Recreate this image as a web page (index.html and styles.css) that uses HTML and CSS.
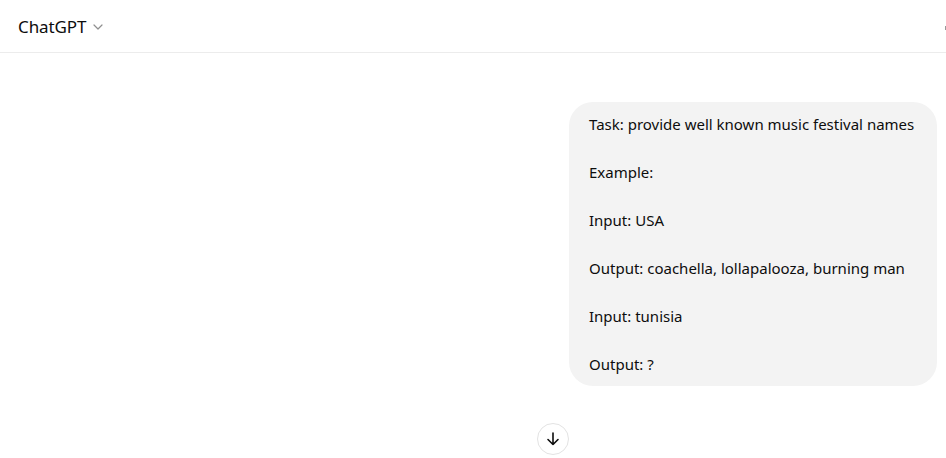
FILE: index.html
```html
<!DOCTYPE html>
<html lang="en">
<head>
<meta charset="utf-8">
<title>ChatGPT</title>
<link rel="stylesheet" href="styles.css">
</head>
<body>
<header class="topbar">
  <div class="model">
    <span class="model-name">ChatGPT</span>
    <svg class="chev" width="12" height="12" viewBox="0 0 12 12" fill="none"><path d="M2 4l4 4 4-4" stroke="#8f8f8f" stroke-width="1.2" stroke-linecap="round" stroke-linejoin="round"/></svg>
  </div>
  <span class="edge-icon"></span>
</header>
<main class="thread">
  <div class="row">
    <div class="bubble">
      <p>Task: provide well known music festival names</p>
      <p>Example:</p>
      <p>Input: USA</p>
      <p>Output: coachella, lollapalooza, burning man</p>
      <p>Input: tunisia</p>
      <p>Output: ?</p>
    </div>
  </div>
  <div class="scroll-row">
    <button class="scroll-btn" aria-label="Scroll down">
      <svg width="18" height="18" viewBox="0 0 18 18" fill="none"><path d="M9 3v11.5M4 9.5l5 5 5-5" stroke="#0d0d0d" stroke-width="1.6" stroke-linecap="round" stroke-linejoin="round"/></svg>
    </button>
  </div>
</main>
</body>
</html>
```
FILE: styles.css
```css
* { box-sizing: border-box; }
html, body { margin: 0; padding: 0; background: #fff; }
body {
  font-family: "Noto Sans", "Open Sans", sans-serif;
  color: #0d0d0d;
  width: 946px;
  height: 458px;
  overflow: hidden;
}
.topbar {
  height: 53px;
  border-bottom: 1px solid #ececec;
  display: flex;
  align-items: center;
  justify-content: space-between;
  padding: 0 0 0 18px;
}
.model { display: flex; align-items: center; gap: 6px; }
.model-name { font-size: 17px; letter-spacing: -0.1px; }
.chev { margin-top: 1px; }
.edge-icon {
  width: 1px; height: 4px; background: #999; margin-top: 4px;
}
.thread { display: flex; flex-direction: column; }
.row {
  display: flex;
  justify-content: flex-end;
  padding: 49px 9px 0 0;
}
.bubble {
  background: #f3f3f3;
  border-radius: 24px;
  padding: 10px 20px 10px 20px;
  width: 368px;
  font-size: 15px;
  line-height: 24px;
}
.bubble p { margin: 0 0 24px 0; white-space: nowrap; }
.bubble p:last-child { margin-bottom: 0; }
.scroll-row { display: flex; justify-content: center; padding: 37px 0 0 160px; }
.scroll-btn {
  width: 32px; height: 32px;
  border-radius: 50%;
  border: 1px solid #e3e3e3;
  background: #fff;
  display: flex; align-items: center; justify-content: center;
  padding: 0;
}
```
